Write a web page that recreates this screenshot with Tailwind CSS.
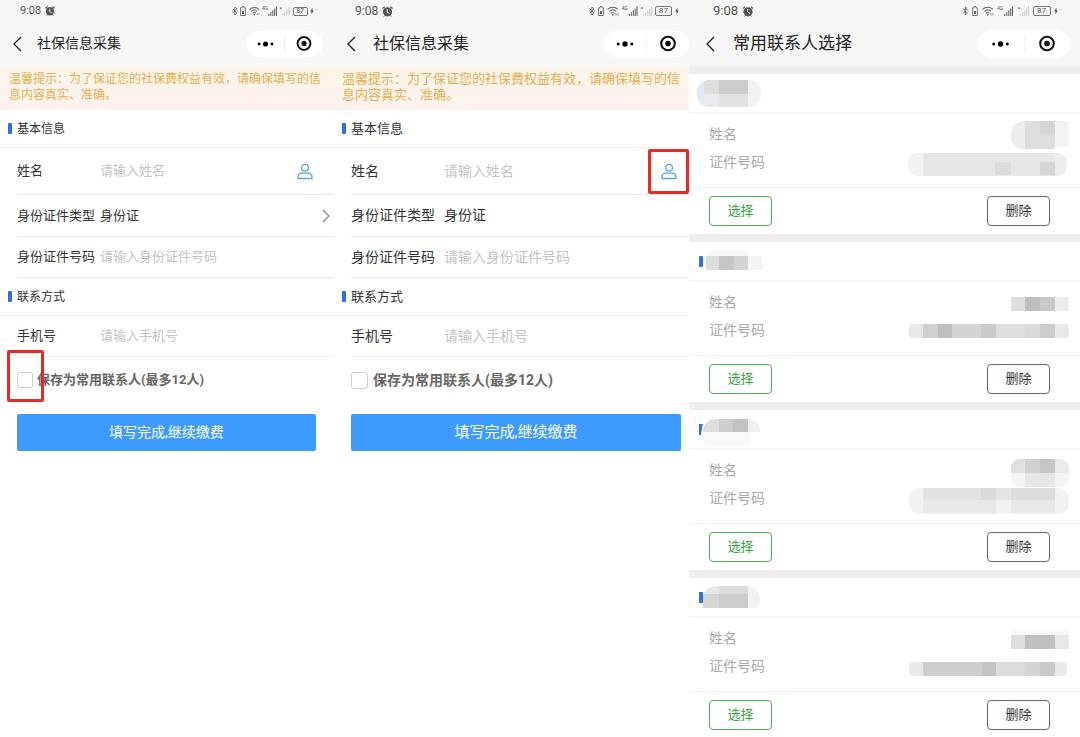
<!DOCTYPE html>
<html lang="zh-CN">
<head>
<meta charset="utf-8">
<meta name="viewport" content="width=device-width, initial-scale=1">
<title>社保信息采集</title>
<script src="https://cdn.jsdelivr.net/npm/@tailwindcss/browser@4"></script>
</head>
<body class="bg-white font-['Roboto','Noto_Sans_CJK_SC',sans-serif] text-[#333]">

<!-- Shared icons -->
<svg class="hidden" aria-hidden="true">
  <symbol id="alarm" viewBox="0 0 11 11">
    <path d="M0.5 2.5 2.8.6M10.5 2.5 8.2.6" stroke="#555" stroke-width="1.2" fill="none"/>
    <circle cx="5.5" cy="5.8" r="4.6" fill="#555"/>
    <path d="M5.2 3.2v2.9l2.2 1.3" stroke="#f7f7f7" stroke-width="1" fill="none"/>
    <path d="M2 10.6l1.2-1.4M9 10.6 7.8 9.2" stroke="#555" stroke-width="1"/>
  </symbol>
  <symbol id="bt" viewBox="0 0 6 10">
    <path d="M.8 2.8l4 4.3L2.9 9V1l1.9 1.9-4 4.3" stroke="#666" stroke-width=".9" fill="none"/>
    <path d="M0 5h.9M5.1 5H6" stroke="#666" stroke-width=".9"/>
  </symbol>
  <symbol id="btbat" viewBox="0 0 6 10">
    <path d="M2 .6h2v1.2h1.4v7.7H.6V1.8H2z" stroke="#666" stroke-width=".9" fill="none"/>
    <path d="M2 5h2v3H2z" fill="#666"/>
  </symbol>
  <symbol id="wifi" viewBox="0 0 12 10">
    <path d="M.6 3.4C3.6.6 8 .6 11 3.4M2.4 5.4c2-1.8 4.800-1.800 6.800 0M4.100 7.200c1.100-.900 2.300-.900 3.400 0" stroke="#666" stroke-width="1.1" fill="none"/>
    <circle cx="5.800" cy="8.800" r=".9" fill="#666"/>
    <path d="M9 7v2.600M11 7v2.600" stroke="#777" stroke-width=".8"/>
  </symbol>
  <symbol id="signal" viewBox="0 0 9 10">
    <path d="M.8 10V7.800M2.800 10V6.200M4.800 10V4.200M6.700 10V2.400M8.500 10V.6" stroke="currentColor" stroke-width="1.100"/>
  </symbol>
  <symbol id="bolt" viewBox="0 0 5 9">
    <path d="M3.200 0 .2 5h1.700L1.500 9 4.800 3.800H3z" fill="#555"/>
  </symbol>
  <symbol id="back" viewBox="0 0 10 16">
    <path d="M9 1 2 8l7 7" stroke="#222" stroke-width="1.400" fill="none"/>
  </symbol>
  <symbol id="dots" viewBox="0 0 18 6">
    <circle cx="2.200" cy="3" r="1.500"/><circle cx="9" cy="3" r="2.700"/><circle cx="15.800" cy="3" r="1.500"/>
  </symbol>
  <symbol id="ring" viewBox="0 0 18 18">
    <circle cx="9" cy="9" r="7.200" fill="none" stroke="#111" stroke-width="2.200"/><circle cx="9" cy="9" r="3" fill="#111"/>
  </symbol>
  <symbol id="person" viewBox="0 0 16 17">
    <g fill="none" stroke="#5aa7d6" stroke-width="1.300">
      <circle cx="8" cy="4.800" r="3.400"/>
      <path d="M1 15.500v-1.300c0-2.600 2-4 4-4h6c2 0 4 1.400 4 4v1.300z"/>
    </g>
  </symbol>
</svg>

<main class="grid min-h-screen grid-cols-[334fr_355fr_391fr] overflow-hidden">

  <!-- Form, step one -->
  <section class="min-w-0">
    <header class="h-[66px] bg-[#f7f7f7]">
      <div class="flex h-[22px] items-center pr-5 pl-5 text-[11px] text-[#555]">
        <span>9:08</span>
        <svg class="ml-1 size-[10px]"><use href="#alarm"/></svg>
        <div class="ml-auto flex w-[82px] items-center justify-between">
          <svg class="h-[10px] w-[6px]"><use href="#bt"/></svg>
          <svg class="h-[10px] w-[6px]"><use href="#btbat"/></svg>
          <svg class="h-[10px] w-[11px]"><use href="#wifi"/></svg>
          <span class="flex"><span class="text-[5px] leading-[5px]">4G</span><svg class="h-[10px] w-[9px] text-[#666]"><use href="#signal"/></svg></span>
          <span class="flex"><span class="text-[5px] leading-[5px]">×</span><svg class="h-[10px] w-[8px] text-[#ccc]"><use href="#signal"/></svg></span>
          <span class="flex h-[9px] w-[15px] items-center justify-center rounded-[2px] border border-[#777] text-[7px] leading-none">87</span>
          <svg class="h-[8px] w-[4px]"><use href="#bolt"/></svg>
        </div>
      </div>
      <div class="flex h-[43px] items-center pr-[11px] pl-3">
        <button type="button" aria-label="返回" class="w-[25px]"><svg class="h-4 w-[10px]"><use href="#back"/></svg></button>
        <h1 class="text-[14px] text-[#222]">社保信息采集</h1>
        <div class="ml-auto flex h-[26px] w-[77px] items-center rounded-full bg-white">
          <button type="button" aria-label="更多" class="flex h-[26px] flex-1 items-center justify-center"><svg class="h-[6px] w-[17px]"><use href="#dots"/></svg></button>
          <span class="h-[18px] w-px bg-[#eee]"></span>
          <button type="button" aria-label="关闭" class="flex h-[26px] flex-1 items-center justify-center"><svg class="h-[17px] w-[16px]"><use href="#ring"/></svg></button>
        </div>
      </div>
    </header>
    <p class="bg-linear-to-b from-[#fcf5eb] to-[#fef2ee] pt-[5px] pr-2 pb-[7px] pl-[9px] text-[12px] leading-4 text-[#e3b04e]">温馨提示：为了保证您的社保费权益有效，请确保填写的信息内容真实、准确。</p>

    <form>
      <h2 class="flex h-[38px] items-center border-b border-[#f2f2f2] pl-2 text-[12px]"><span class="mr-[5px] h-[11px] w-1 rounded-[1px] bg-[#3470e4]"></span>基本信息</h2>
      <div class="ml-[17px] flex h-[47px] items-center border-b border-[#ececec] pr-[21px] text-[13px]">
        <label for="name1" class="w-[83px] shrink-0">姓名</label>
        <input id="name1" type="text" placeholder="请输入姓名" class="w-full min-w-0 outline-none placeholder:text-[#c4c4c4]">
        <button type="button" aria-label="选择常用联系人" class="shrink-0"><svg class="h-[17px] w-4"><use href="#person"/></svg></button>
      </div>
      <div class="ml-[17px] flex h-[42px] items-center border-b border-[#ececec] pr-1 text-[13px]">
        <label for="type1" class="w-[83px] shrink-0">身份证件类型</label>
        <select id="type1" class="w-full min-w-0 appearance-none outline-none"><option>身份证</option></select>
        <svg class="h-[14px] w-[8px] shrink-0" viewBox="0 0 8 14"><path d="M1 1l6 6-6 6" fill="none" stroke="#888" stroke-width="1.200"/></svg>
      </div>
      <div class="ml-[17px] flex h-[41px] items-center border-b border-[#ececec] text-[13px]">
        <label for="no1" class="w-[83px] shrink-0">身份证件号码</label>
        <input id="no1" type="text" placeholder="请输入身份证件号码" class="w-full min-w-0 outline-none placeholder:text-[#c4c4c4]">
      </div>
      <h2 class="flex h-[38px] items-center border-b border-[#f2f2f2] pl-2 text-[12px]"><span class="mr-[5px] h-[11px] w-1 rounded-[1px] bg-[#3470e4]"></span>联系方式</h2>
      <div class="ml-[17px] flex h-[41px] items-center border-b border-[#f2f2f2] text-[13px]">
        <label for="tel1" class="w-[83px] shrink-0">手机号</label>
        <input id="tel1" type="tel" placeholder="请输入手机号" class="w-full min-w-0 outline-none placeholder:text-[#c4c4c4]">
      </div>
      <div class="relative flex h-[46px] items-center pl-[17px] text-[13px] font-bold text-[#666]">
        <input id="save1" type="checkbox" class="size-4 shrink-0 appearance-none rounded-[2px] border border-[#cfcfdc] bg-white">
        <label for="save1" class="ml-1">保存为常用联系人(最多12人)</label>
        <span class="pointer-events-none absolute -top-[7px] left-[7px] h-[52px] w-[37px] rounded-[2px] border-3 border-[#e62b25]"></span>
      </div>
      <div class="pt-[11px] pr-[18px] pl-[17px]">
        <button type="button" class="h-[37px] w-full rounded-[2px] bg-[#3d9bff] text-[14px] text-white">填写完成,继续缴费</button>
      </div>
    </form>
  </section>

  <!-- Form, step two -->
  <section class="min-w-0">
    <header class="h-[66px] bg-[#f7f7f7]">
      <div class="flex h-[22px] items-center pr-[10px] pl-[21px] text-[12px] text-[#555]">
        <span>9:08</span>
        <svg class="ml-1 size-[11px]"><use href="#alarm"/></svg>
        <div class="ml-auto flex w-[90px] items-center justify-between">
          <svg class="h-[10px] w-[6px]"><use href="#bt"/></svg>
          <svg class="h-[10px] w-[6px]"><use href="#btbat"/></svg>
          <svg class="h-[10px] w-[12px]"><use href="#wifi"/></svg>
          <span class="flex"><span class="text-[5px] leading-[5px]">4G</span><svg class="h-[10px] w-[10px] text-[#666]"><use href="#signal"/></svg></span>
          <span class="flex"><span class="text-[5px] leading-[5px]">×</span><svg class="h-[10px] w-[9px] text-[#ccc]"><use href="#signal"/></svg></span>
          <span class="flex h-[10px] w-[17px] items-center justify-center rounded-[2px] border border-[#777] text-[8px] leading-none">87</span>
          <svg class="h-[8px] w-[4px]"><use href="#bolt"/></svg>
        </div>
      </div>
      <div class="flex h-[43px] items-center pl-3">
        <button type="button" aria-label="返回" class="w-[27px]"><svg class="h-4 w-[10px]"><use href="#back"/></svg></button>
        <h1 class="text-[16px] text-[#222]">社保信息采集</h1>
        <div class="ml-auto flex h-[26px] w-[85px] items-center rounded-full bg-white">
          <button type="button" aria-label="更多" class="flex h-[26px] flex-1 items-center justify-center"><svg class="h-[6px] w-[18px]"><use href="#dots"/></svg></button>
          <span class="h-[18px] w-px bg-[#f2f2f2]"></span>
          <button type="button" aria-label="关闭" class="flex h-[26px] flex-1 items-center justify-center"><svg class="h-[17px] w-[18px]"><use href="#ring"/></svg></button>
        </div>
      </div>
    </header>
    <p class="bg-linear-to-b from-[#fcf5eb] to-[#fef2ee] pt-[5px] pr-1 pb-[7px] pl-2 text-[13px] leading-4 text-[#e3b04e]">温馨提示：为了保证您的社保费权益有效，请确保填写的信息内容真实、准确。</p>

    <form>
      <h2 class="flex h-[38px] items-center border-b border-[#f2f2f2] pl-2 text-[13px]"><span class="mr-[5px] h-[11px] w-1 rounded-[1px] bg-[#3470e4]"></span>基本信息</h2>
      <div class="relative ml-[17px] flex h-[47px] items-center border-b border-[#ececec] pr-3 text-[14px]">
        <label for="name2" class="w-[93px] shrink-0">姓名</label>
        <input id="name2" type="text" placeholder="请输入姓名" class="w-full min-w-0 outline-none placeholder:text-[#c4c4c4]">
        <button type="button" aria-label="选择常用联系人" class="shrink-0"><svg class="h-[17px] w-4"><use href="#person"/></svg></button>
        <span class="pointer-events-none absolute top-px right-0 h-[45px] w-[41px] rounded-[2px] border-3 border-[#e62b25]"></span>
      </div>
      <div class="ml-[17px] flex h-[42px] items-center border-b border-[#ececec] text-[14px]">
        <label for="type2" class="w-[93px] shrink-0">身份证件类型</label>
        <select id="type2" class="w-full min-w-0 appearance-none outline-none"><option>身份证</option></select>
      </div>
      <div class="ml-[17px] flex h-[41px] items-center border-b border-[#ececec] text-[14px]">
        <label for="no2" class="w-[93px] shrink-0">身份证件号码</label>
        <input id="no2" type="text" placeholder="请输入身份证件号码" class="w-full min-w-0 outline-none placeholder:text-[#c4c4c4]">
      </div>
      <h2 class="flex h-[38px] items-center border-b border-[#f2f2f2] pl-2 text-[13px]"><span class="mr-[5px] h-[11px] w-1 rounded-[1px] bg-[#3470e4]"></span>联系方式</h2>
      <div class="ml-[17px] flex h-[41px] items-center border-b border-[#f2f2f2] text-[14px]">
        <label for="tel2" class="w-[93px] shrink-0">手机号</label>
        <input id="tel2" type="tel" placeholder="请输入手机号" class="w-full min-w-0 outline-none placeholder:text-[#c4c4c4]">
      </div>
      <div class="flex h-[46px] items-center pl-[17px] text-[14px] font-bold text-[#666]">
        <input id="save2" type="checkbox" class="size-[17px] shrink-0 appearance-none rounded-[3px] border border-[#d0d0d0] bg-white">
        <label for="save2" class="ml-[5px]">保存为常用联系人(最多12人)</label>
      </div>
      <div class="pt-[11px] pr-2 pl-[17px]">
        <button type="button" class="h-[37px] w-full rounded-[2px] bg-[#3d9bff] text-[15px] text-white">填写完成,继续缴费</button>
      </div>
    </form>
  </section>

  <!-- Saved contacts -->
  <section class="min-w-0">
    <header class="h-[66px] bg-[#f7f7f7]">
      <div class="flex h-[22px] items-center pr-[22px] pl-6 text-[13px] text-[#555]">
        <span>9:08</span>
        <svg class="ml-1 h-[11px] w-3"><use href="#alarm"/></svg>
        <div class="ml-auto flex w-[96px] items-center justify-between">
          <svg class="h-[10px] w-[7px]"><use href="#bt"/></svg>
          <svg class="h-[10px] w-[6px]"><use href="#btbat"/></svg>
          <svg class="h-[10px] w-[12px]"><use href="#wifi"/></svg>
          <span class="flex"><span class="text-[5px] leading-[5px]">4G</span><svg class="h-[10px] w-[11px] text-[#666]"><use href="#signal"/></svg></span>
          <span class="flex"><span class="text-[5px] leading-[5px]">×</span><svg class="h-[10px] w-[9px] text-[#ccc]"><use href="#signal"/></svg></span>
          <span class="flex h-[10px] w-[18px] items-center justify-center rounded-[2px] border border-[#777] text-[8px] leading-none">87</span>
          <svg class="h-[8px] w-[4px]"><use href="#bolt"/></svg>
        </div>
      </div>
      <div class="flex h-[43px] items-center pr-[10px] pl-4">
        <button type="button" aria-label="返回" class="w-7"><svg class="h-4 w-[10px]"><use href="#back"/></svg></button>
        <h1 class="text-[17px] text-[#222]">常用联系人选择</h1>
        <div class="ml-auto flex h-[26px] w-[92px] items-center rounded-full bg-white">
          <button type="button" aria-label="更多" class="flex h-[26px] flex-1 items-center justify-center"><svg class="h-[6px] w-[19px]"><use href="#dots"/></svg></button>
          <span class="h-[18px] w-px bg-[#f4f4f4]"></span>
          <button type="button" aria-label="关闭" class="flex h-[26px] flex-1 items-center justify-center"><svg class="h-[17px] w-[18px]"><use href="#ring"/></svg></button>
        </div>
      </div>
    </header>

    <article class="border-t-8 border-[#eee]">
      <div class="h-[39px] border-b border-[#f2f2f2]">
        <svg class="block h-[38px] w-[80px]" shape-rendering="crispEdges" aria-hidden="true">
          <clipPath id="h1"><rect x="8" y="6" width="64" height="27" rx="12"/></clipPath>
          <g clip-path="url(#h1)">
            <path fill="#e3e8fa" d="M8 6h7v27H8z"/><path fill="#dedede" d="M15 6h15v14H15z"/><path fill="#ebebee" d="M15 20h15v13H15z"/><path fill="#cbcbcb" d="M30 6h29v14H30z"/><path fill="#e2e2e2" d="M30 20h29v13H30z"/><path fill="#f2f2f2" d="M59 6h13v27H59z"/>
          </g>
        </svg>
      </div>
      <dl class="border-b border-[#f2f2f2] pt-[7px] pr-[11px] pb-[11px] pl-5 text-[14px] leading-7 text-[#aaa]">
        <div class="flex h-7 justify-between"><dt>姓名</dt>
          <dd><svg class="block h-7 w-[164px] overflow-visible" aria-hidden="true">
            <clipPath id="n1"><rect x="106" y="1" width="74" height="29" rx="13"/></clipPath>
            <g clip-path="url(#n1)"><path fill="#ededed" d="M106 1h14v29h-14z"/><path fill="#dedede" d="M120 1h30v28h-30z"/><path fill="#d6d6d6" d="M135 1h15v13h-15z"/><path fill="#f3f3f3" d="M150 1h14v26h-14z"/></g>
          </svg></dd></div>
        <div class="flex h-7 justify-between"><dt>证件号码</dt>
          <dd><svg class="block h-7 w-[164px] overflow-visible" aria-hidden="true">
            <clipPath id="i1"><rect x="3" y="5" width="159" height="23" rx="9"/></clipPath>
            <g clip-path="url(#i1)"><path fill="#f2f2f2" d="M3 5h15v23H3z"/><path fill="#e6e6e6" d="M18 5h132v23H18z"/><path fill="#dcdcdc" d="M90 14h16v13H90z"/><path fill="#d6d6d6" d="M135 14h15v13h-15z"/><path fill="#eee" d="M150 5h13v23h-13z"/></g>
          </svg></dd></div>
      </dl>
      <div class="flex justify-between pt-2 pr-[30px] pb-2 pl-5 text-[13px]">
        <button type="button" class="h-[30px] w-[63px] rounded-[4px] border border-[#4caf50] text-[#38a63c]">选择</button>
        <button type="button" class="h-[30px] w-[63px] rounded-[4px] border border-[#666] text-[#333]">删除</button>
      </div>
    </article>

    <article class="border-t-8 border-[#eee]">
      <div class="h-[39px] border-b border-[#f2f2f2]">
        <svg class="block h-[38px] w-[80px]" aria-hidden="true">
          <rect x="10" y="14" width="4" height="11" rx="1" fill="#3470e4"/>
          <path fill="#f7f7f7" d="M17 14q4-6 12-6h30v6z"/>
          <path fill="#dcdcdc" d="M19 14h11v14H19q-2 0-2-3v-9q0-2 2-2z"/><path fill="#c6c6c6" d="M30 14h15v14H30z"/><path fill="#d4d4d4" d="M45 14h14v14H45z"/><path fill="#f4f4f4" d="M59 14h14v14H59z"/>
        </svg>
      </div>
      <dl class="border-b border-[#f2f2f2] pt-[7px] pr-[11px] pb-[11px] pl-5 text-[14px] leading-7 text-[#aaa]">
        <div class="flex h-7 justify-between"><dt>姓名</dt>
          <dd><svg class="block h-7 w-[164px]" aria-hidden="true"><path fill="#dedede" d="M106 9h14v14h-14z"/><path fill="#bebebe" d="M120 9h15v14h-15z"/><path fill="#cacaca" d="M135 9h15v14h-15z"/><path fill="#ededed" d="M150 9h14v14h-14z"/></svg></dd></div>
        <div class="flex h-7 justify-between"><dt>证件号码</dt>
          <dd><svg class="block h-7 w-[164px]" aria-hidden="true">
            <clipPath id="i2"><rect x="4" y="8" width="160" height="14" rx="4"/></clipPath>
            <g clip-path="url(#i2)"><path fill="#e8e8e8" d="M4 8h160v14H4z"/><path fill="#d0d0d0" d="M18 8h15v14H18z"/><path fill="#bfbfbf" d="M33 8h14v14H33z"/><path fill="#d4d4d4" d="M47 8h29v14H47z"/><path fill="#cacaca" d="M76 8h15v14H76z"/><path fill="#dedede" d="M91 8h29v14H91z"/><path fill="#dadada" d="M120 8h15v14h-15z"/><path fill="#ccc" d="M135 8h15v14h-15z"/></g>
          </svg></dd></div>
      </dl>
      <div class="flex justify-between pt-2 pr-[30px] pb-2 pl-5 text-[13px]">
        <button type="button" class="h-[30px] w-[63px] rounded-[4px] border border-[#4caf50] text-[#38a63c]">选择</button>
        <button type="button" class="h-[30px] w-[63px] rounded-[4px] border border-[#666] text-[#333]">删除</button>
      </div>
    </article>

    <article class="border-t-8 border-[#eee]">
      <div class="h-[39px] border-b border-[#f2f2f2]">
        <svg class="block h-[38px] w-[80px]" aria-hidden="true">
          <path d="M10 14h4l-1 4-1 7h-2z" fill="#3470e4"/>
          <path fill="#f8f8f8" d="M14 22h47v14H18q-4-4-4-14z"/>
          <clipPath id="h3"><path d="M14 22q0-13 15-13h29q13 0 13 13z"/></clipPath>
          <g clip-path="url(#h3)"><path fill="#dedede" d="M14 9h16v13H14z"/><path fill="#cecece" d="M30 9h14v13H30z"/><path fill="#c2c2c2" d="M44 9h15v13H44z"/><path fill="#f0f0f0" d="M59 9h12v13H59z"/></g>
        </svg>
      </div>
      <dl class="border-b border-[#f2f2f2] pt-[7px] pr-[11px] pb-[11px] pl-5 text-[14px] leading-7 text-[#aaa]">
        <div class="flex h-7 justify-between"><dt>姓名</dt>
          <dd><svg class="block h-7 w-[164px] overflow-visible" aria-hidden="true">
            <clipPath id="n3"><rect x="106" y="3" width="58" height="28" rx="9"/></clipPath>
            <g clip-path="url(#n3)"><path fill="#f3f3f3" d="M106 3h58v28h-58z"/><path fill="#e0e0e0" d="M106 3h14v14h-14z"/><path fill="#d0d0d0" d="M120 3h15v14h-15z"/><path fill="#c6c6c6" d="M135 3h15v14h-15z"/><path fill="#ebebeb" d="M150 3h14v14h-14z"/><path fill="#e6e6e6" d="M120 17h30v14h-30z"/></g>
          </svg></dd></div>
        <div class="flex h-7 justify-between"><dt>证件号码</dt>
          <dd><svg class="block h-7 w-[164px] overflow-visible" aria-hidden="true">
            <clipPath id="i3"><rect x="4" y="4" width="160" height="26" rx="10"/></clipPath>
            <g clip-path="url(#i3)"><path fill="#f2f2f2" d="M4 4h160v26H4z"/><path fill="#e2e2e2" d="M18 4h58v12H18z"/><path fill="#dadada" d="M76 4h15v12H76z"/><path fill="#e4e4e4" d="M91 4h15v12H91z"/><path fill="#dcdcdc" d="M106 4h44v12h-44z"/><path fill="#e8e8e8" d="M18 16h73v13H18zM106 16h44v13h-44z"/></g>
          </svg></dd></div>
      </dl>
      <div class="flex justify-between pt-2 pr-[30px] pb-2 pl-5 text-[13px]">
        <button type="button" class="h-[30px] w-[63px] rounded-[4px] border border-[#4caf50] text-[#38a63c]">选择</button>
        <button type="button" class="h-[30px] w-[63px] rounded-[4px] border border-[#666] text-[#333]">删除</button>
      </div>
    </article>

    <article class="border-t-8 border-[#eee]">
      <div class="h-[39px] border-b border-[#f2f2f2]">
        <svg class="block h-[38px] w-[80px]" aria-hidden="true">
          <path d="M10 14h4v11h-4z" fill="#3470e4"/>
          <clipPath id="h4"><path d="M14 30V18q3-10 15-10h30q12 3 12 14 0 8-6 8z"/></clipPath>
          <g clip-path="url(#h4)"><path fill="#e8e8e8" d="M14 8h16v8H14z"/><path fill="#dcdcdc" d="M30 8h29v8H30z"/><path fill="#d6d6d6" d="M14 16h16v14H14z"/><path fill="#ccc" d="M30 16h29v14H30z"/><path fill="#f2f2f2" d="M59 8h12v22H59z"/></g>
        </svg>
      </div>
      <dl class="border-b border-[#f2f2f2] pt-[7px] pr-[11px] pb-[11px] pl-5 text-[14px] leading-7 text-[#aaa]">
        <div class="flex h-7 justify-between"><dt>姓名</dt>
          <dd><svg class="block h-7 w-[164px]" aria-hidden="true"><path fill="#f7f7f7" d="M106 6h58v5h-58z"/><path fill="#dedede" d="M106 11h14v14h-14z"/><path fill="#c0c0c0" d="M120 11h30v14h-30z"/><path fill="#e8e8e8" d="M150 11h14v14h-14z"/></svg></dd></div>
        <div class="flex h-7 justify-between"><dt>证件号码</dt>
          <dd><svg class="block h-7 w-[164px]" aria-hidden="true">
            <clipPath id="i4"><rect x="4" y="10" width="158" height="14" rx="3"/></clipPath>
            <g clip-path="url(#i4)"><path fill="#e9e9e9" d="M4 10h158v14H4z"/><path fill="#cfcfcf" d="M18 10h59v14H18z"/><path fill="#c4c4c4" d="M77 10h14v14H77z"/><path fill="#dcdcdc" d="M91 10h29v14H91z"/><path fill="#d4d4d4" d="M120 10h15v14h-15z"/><path fill="#c9c9c9" d="M135 10h15v14h-15z"/></g>
          </svg></dd></div>
      </dl>
      <div class="flex justify-between pt-2 pr-[30px] pl-5 text-[13px]">
        <button type="button" class="h-[30px] w-[63px] rounded-[4px] border border-[#4caf50] text-[#38a63c]">选择</button>
        <button type="button" class="h-[30px] w-[63px] rounded-[4px] border border-[#666] text-[#333]">删除</button>
      </div>
    </article>
  </section>
</main>
</body>
</html>
